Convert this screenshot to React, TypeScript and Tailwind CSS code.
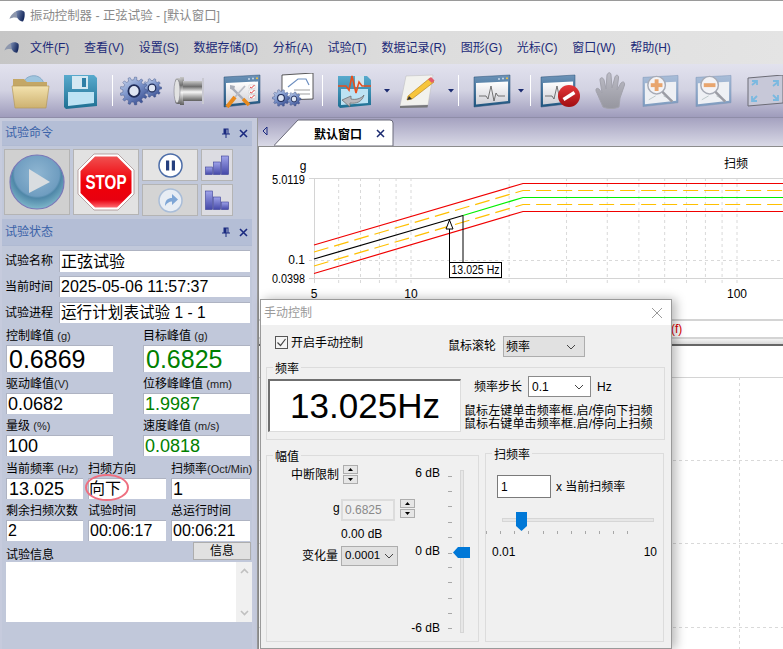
import React from "react";

const font = { fontFamily: '"Liberation Sans","Noto Sans CJK SC",sans-serif' };

function gearPath(cx: number, cy: number, r: number, teeth: number) {
  const pts: string[] = [];
  const R = r * 0.8;
  for (let i = 0; i < teeth; i++) {
    const a = (i / teeth) * Math.PI * 2;
    const s = (Math.PI * 2) / teeth;
    const p = (ang: number, rad: number) => `${(cx + Math.cos(ang) * rad).toFixed(1)} ${(cy + Math.sin(ang) * rad).toFixed(1)}`;
    pts.push(p(a - s * 0.28, R), p(a - s * 0.16, r), p(a + s * 0.16, r), p(a + s * 0.28, R));
  }
  return "M" + pts.join("L") + "Z";
}

function Gear({ cx, cy, r, teeth = 10 }: { cx: number; cy: number; r: number; teeth?: number }) {
  return (
    <g>
      <path d={gearPath(cx, cy, r, teeth)} fill="url(#gearG)" stroke="#33467c" strokeWidth="0.4" />
      <ellipse cx={cx} cy={cy} rx={r * 0.4} ry={r * 0.42} fill="#dfe6f3" stroke="#1f2c58" strokeWidth={r * 0.13} />
    </g>
  );
}

function Defs() {
  return (
    <svg width="0" height="0" className="absolute">
      <defs>
        <linearGradient id="gearG" x1="0" y1="0" x2="0.7" y2="1"><stop offset="0" stopColor="#d3dff2" /><stop offset="0.5" stopColor="#7f97cc" /><stop offset="1" stopColor="#3a4f92" /></linearGradient>
        <linearGradient id="folderG" x1="0" y1="0" x2="0" y2="1"><stop offset="0" stopColor="#f3e2ae" /><stop offset="1" stopColor="#cdb170" /></linearGradient>
        <linearGradient id="floppyG" x1="0" y1="0" x2="0" y2="1"><stop offset="0" stopColor="#58aacd" /><stop offset="1" stopColor="#1e6f92" /></linearGradient>
        <linearGradient id="cylG" x1="0" y1="0" x2="0" y2="1"><stop offset="0" stopColor="#c8c8c8" /><stop offset="0.28" stopColor="#6f6f6f" /><stop offset="0.55" stopColor="#f6f6f6" /><stop offset="1" stopColor="#5f5f5f" /></linearGradient>
        <linearGradient id="winG" x1="0" y1="0" x2="0" y2="1"><stop offset="0" stopColor="#6d93b8" /><stop offset="1" stopColor="#1f5680" /></linearGradient>
        <linearGradient id="winPale" x1="0" y1="0" x2="0" y2="1"><stop offset="0" stopColor="#a9bdd8" /><stop offset="1" stopColor="#7f9cc0" /></linearGradient>
        <linearGradient id="paperG" x1="0" y1="0" x2="0" y2="1"><stop offset="0" stopColor="#fff" /><stop offset="1" stopColor="#cfcfd6" /></linearGradient>
        <radialGradient id="playG" cx="0.5" cy="0.35" r="0.75"><stop offset="0" stopColor="#8fb6d2" /><stop offset="0.55" stopColor="#6f9dc0" /><stop offset="0.6" stopColor="#4f87a8" /><stop offset="1" stopColor="#98d0dc" /></radialGradient>
        <linearGradient id="stopG" x1="0" y1="0" x2="0" y2="1"><stop offset="0" stopColor="#f05050" /><stop offset="0.5" stopColor="#f00008" /><stop offset="0.85" stopColor="#e80010" /><stop offset="1" stopColor="#ff6a70" /></linearGradient>
        <linearGradient id="barG" x1="0" y1="0" x2="0" y2="1"><stop offset="0" stopColor="#a0a4ea" /><stop offset="1" stopColor="#4448a8" /></linearGradient>
        <linearGradient id="handG" x1="0" y1="0" x2="0" y2="1"><stop offset="0" stopColor="#bcbcc6" /><stop offset="1" stopColor="#96969f" /></linearGradient>
        <linearGradient id="noEntry" x1="0" y1="0" x2="0" y2="1"><stop offset="0" stopColor="#e4383a" /><stop offset="1" stopColor="#a00c10" /></linearGradient>
        <linearGradient id="logoG" x1="0" y1="0" x2="1" y2="0.4"><stop offset="0" stopColor="#7d8fb4" /><stop offset="1" stopColor="#16295e" /></linearGradient>
      </defs>
    </svg>
  );
}

function DropArrow() {
  return <svg width="6" height="4" viewBox="0 0 6 4"><path d="M0 0H6L3 3.5Z" fill="#1a2a70" /></svg>;
}
function Sep() {
  return <div className="w-px h-[31px] bg-white shrink-0" />;
}

function Folder() {
  return (
    <svg width="40" height="38" viewBox="0 0 40 38" className="shrink-0">
      <path d="M12 12C14 2 30 0 33 12Z" fill="#9fc5de" stroke="#86aac8" />
      <path d="M2 7H13L16 10H36V20H2Z" fill="#c4a765" />
      <path d="M1 14H38L35 36H4Z" fill="url(#folderG)" stroke="#b59a5c" strokeWidth="0.7" />
    </svg>
  );
}
function Floppy() {
  return (
    <svg width="36" height="38" viewBox="0 0 36 38" className="shrink-0">
      <path d="M1 3H31L34 6V34L3 37L1 35Z" fill="url(#floppyG)" />
      <rect x="9" y="4" width="16" height="13" fill="#d4e8f2" />
      <rect x="19" y="6" width="4" height="9" fill="#2e7fa6" />
      <path d="M5 20H31V31L5 34Z" fill="#bde3f4" />
    </svg>
  );
}
function Gears() {
  return (
    <svg width="42" height="36" viewBox="0 0 42 36" className="shrink-0">
      <Gear cx={32} cy={15} r={9.5} teeth={10} />
      <Gear cx={14} cy={18} r={14} teeth={13} />
    </svg>
  );
}
function Cylinder() {
  return (
    <svg width="36" height="30" viewBox="0 0 36 30" className="shrink-0">
      <rect x="8" y="1" width="4" height="28" fill="url(#cylG)" />
      <rect x="11" y="5" width="19" height="20" fill="url(#cylG)" />
      <rect x="30" y="2" width="2" height="26" fill="#c9c9d2" />
      <rect x="3" y="2" width="7" height="26" rx="3" fill="url(#cylG)" />
      <ellipse cx="5" cy="15" rx="3" ry="12" fill="#e2e2e2" stroke="#70707a" strokeWidth="0.5" />
    </svg>
  );
}
function WinFrame({ pale, children, w = 38 }: { pale?: boolean; children?: React.ReactNode; w?: number }) {
  return (
    <svg width={w} height="34" viewBox="0 0 38 34" className="shrink-0">
      <path d="M1 3L37 1V29L1 33Z" fill={pale ? "url(#winPale)" : "url(#winG)"} stroke={pale ? "#7b93b5" : "#264f75"} strokeWidth="0.5" />
      <path d="M3 9L35 7.5V27L3 30.5Z" fill="url(#paperG)" />
      <circle cx="26" cy="5" r="1" fill="#c9d9ea" /><circle cx="30" cy="4.6" r="1" fill="#c9d9ea" /><circle cx="34" cy="4.3" r="1" fill="#f4c542" />
      {children}
    </svg>
  );
}
function Tools() {
  return (
    <WinFrame>
      <path d="M26 11h6v3.5h-6zM26 16h6v3.5h-6zM26 21h6v3.5h-6z" fill="#fff" stroke="#bbb" strokeWidth="0.4" />
      <path d="M27 13l1.5 1 3-3M27 18l1.5 1 3-3M27 23l1.5 1 3-3" fill="none" stroke="#d22" strokeWidth="0.9" />
      <path d="M9 14L25 30" stroke="#a8adb8" strokeWidth="2.4" />
      <path d="M7 11l5 1-1 4-4-1z" fill="#a8adb8" />
      <path d="M22 12L12 23" stroke="#b9bcc4" strokeWidth="1.8" />
      <path d="M12 23L4 33" stroke="#e98a1c" strokeWidth="4" />
      <path d="M20 25L26 31" stroke="#e98a1c" strokeWidth="3.5" />
    </WinFrame>
  );
}
function GearDoc() {
  return (
    <svg width="44" height="36" viewBox="0 0 44 36" className="shrink-0">
      <path d="M10 2L41 0V26L10 27Z" fill="#fff" stroke="#333" strokeWidth="0.8" />
      <path d="M16 14L26 6H34L37 12" fill="none" stroke="#6d8fc0" strokeWidth="1.2" />
      <path d="M22 17H38M24 21H38" stroke="#777" strokeWidth="0.7" />
      <Gear cx={22} cy={26} r={7} teeth={9} />
      <Gear cx={9} cy={25} r={8.5} teeth={10} />
    </svg>
  );
}
function WaveFloppy() {
  return (
    <svg width="36" height="36" viewBox="0 0 36 36" className="shrink-0">
      <path d="M1 3H30L34 7V32L3 35L1 33Z" fill="url(#floppyG)" />
      <rect x="18" y="3" width="9" height="11" fill="#cfe4ee" />
      <path d="M4 16H31V30L4 32Z" fill="#bde3f4" />
      <path d="M1 13H9L12 17L15 3L19 20L22 9L25 13H34" fill="none" stroke="#e6501e" strokeWidth="1.6" />
      <path d="M27 22C24 26 18 27 14 26V23L5 27L13 34V30C19 31 25 29 27 22Z" fill="#b8b8bd" stroke="#666" strokeWidth="0.7" />
    </svg>
  );
}
function Note() {
  return (
    <svg width="36" height="34" viewBox="0 0 36 34" className="shrink-0">
      <path d="M7 2L34 1L29 31L1 32Z" fill="#f2f2ee" stroke="#bbb" strokeWidth="0.5" />
      <path d="M1 32L29 31L28.5 33.5L1 34Z" fill="#77787a" />
      <path d="M9 22L31 4L35 8L13 25L8 26Z" fill="#f7c53b" stroke="#b07c12" strokeWidth="0.6" />
      <path d="M29 5.5L32 3L35.5 6.5L33 9Z" fill="#e25a6a" />
      <path d="M8 26L10 22L13 25Z" fill="#333" />
    </svg>
  );
}
const pulse = "M6 22H13L15 25L18 12L21 27L23 19L25 22H32";
function WaveWin() {
  return <WinFrame><path d={pulse} fill="none" stroke="#555" strokeWidth="0.8" /></WinFrame>;
}
function StopWin() {
  return (
    <svg width="41" height="34" viewBox="0 0 41 34" className="shrink-0">
      <path d="M1 3L35 1V29L1 33Z" fill="url(#winG)" stroke="#264f75" strokeWidth="0.5" />
      <path d="M3 9L33 7.5V27L3 30.5Z" fill="url(#paperG)" />
      <path d="M5 22H12L14 25L17 12L20 26" fill="none" stroke="#555" strokeWidth="0.8" />
      <circle cx="29" cy="22" r="11" fill="url(#noEntry)" />
      <path d="M23.5 25.5L34.5 18.5" stroke="#fff" strokeWidth="3.4" />
    </svg>
  );
}
function Hand() {
  return (
    <svg width="32" height="38" viewBox="0 0 32 38" className="shrink-0">
      <path d="M9 35L3 21C1 18 2 15 5 17L8 21L6 8C6 5 9 5 10 8L12 17L13 3C14 0 17 0 17 3L18 16L21 5C22 2 25 3 24.5 6L23 18L27 11C29 9 31 10 30.5 13L26 26L25 35C20 37 14 37 9 35Z" fill="url(#handG)" stroke="#a2a2ac" />
    </svg>
  );
}
function ZoomIcon({ plus }: { plus?: boolean }) {
  return (
    <svg width="37" height="34" viewBox="0 0 38 34" className="shrink-0">
      <path d="M1 3L37 1V29L1 33Z" fill="url(#winPale)" stroke="#7b93b5" strokeWidth="0.5" />
      <path d="M3 9L35 7.5V27L3 30.5Z" fill="#eef0f4" />
      <path d="M7 26L14 22M22 22L32 27" stroke="#9aa" strokeWidth="0.6" />
      <circle cx="15" cy="11" r="9" fill="#f3f3f6" stroke="#a7abb6" strokeWidth="1.5" />
      <path d="M21 18L31 28" stroke="#9b9ca4" strokeWidth="2.5" />
      <rect x="9" y="9" width="12" height="4" fill="#e8a56e" />
      {plus && <rect x="13" y="5" width="4" height="12" fill="#e8a56e" />}
    </svg>
  );
}
function FitIcon() {
  return (
    <svg width="36" height="32" viewBox="0 0 36 32" className="shrink-0">
      <path d="M1 3L36 0V28L1 31Z" fill="#c7c8d8" stroke="#6c6c76" />
      <path d="M5 10L10 6M5 6H10V10M31 7L26 11M26 6H31V11M5 26L10 21M5 21V26H10M31 25L26 20M31 20V25H26" fill="none" stroke="#7bb9e0" strokeWidth="1.8" />
    </svg>
  );
}

function Toolbar() {
  return (
    <div className="h-[54px] flex items-center pl-[11px] border-b border-[#8f8da8] bg-gradient-to-b from-[#e2e2ee] via-[#d2d2e2] to-[#9f9cbc] overflow-hidden">
      <Folder />
      <div className="ml-[12px]"><Floppy /></div>
      <div className="ml-[13px]"><Sep /></div>
      <div className="ml-[7px]"><Gears /></div>
      <div className="ml-[10px]"><Cylinder /></div>
      <div className="ml-[15px]"><Tools /></div>
      <div className="ml-[11px]"><GearDoc /></div>
      <div className="ml-[6px]"><Sep /></div>
      <div className="ml-[14px]"><WaveFloppy /></div>
      <div className="ml-[11px]"><DropArrow /></div>
      <div className="ml-[9px]"><Note /></div>
      <div className="ml-[13px]"><DropArrow /></div>
      <div className="ml-[4px]"><Sep /></div>
      <div className="ml-[14px]"><WaveWin /></div>
      <div className="ml-[7px]"><DropArrow /></div>
      <div className="ml-[6px]"><Sep /></div>
      <div className="ml-[9px]"><StopWin /></div>
      <div className="ml-[13px]"><Hand /></div>
      <div className="ml-[16px]"><ZoomIcon plus /></div>
      <div className="ml-[16px]"><ZoomIcon /></div>
      <div className="ml-[15px]"><FitIcon /></div>
    </div>
  );
}

function PanelHeader({ title, h }: { title: string; h: string }) {
  return (
    <div className={`${h} flex items-center pl-[3px] pr-[4px] bg-[#b4bed6] border-b border-[#b0bad2]`}>
      <span className="text-[12px] text-[#3a62a8] flex-1">{title}</span>
      <svg width="10" height="10" viewBox="0 0 10 10" className="mr-[8px]"><path d="M2.5 0.5H7.5V5.5H9V6.5H5.5V10H4.5V6.5H1V5.5H2.5ZM5.5 1.5V5.5H6.5V1.5Z" fill="#1a2a80" /></svg>
      <svg width="9" height="9" viewBox="0 0 9 9"><path d="M1 1L8 8M8 1L1 8" stroke="#1a2a80" strokeWidth="1.6" /></svg>
    </div>
  );
}

function Field({ v, size = "text-[16px]", color = "text-black", h = "h-[21px]", pl = "pl-px" }: { v: string; size?: string; color?: string; h?: string; pl?: string }) {
  return (
    <div className={`${h} ${pl} ${size} ${color} bg-white border-t border-l border-[#aeb3c2] flex items-center leading-none whitespace-nowrap overflow-hidden`}>
      {v}
    </div>
  );
}

function Lbl({ t, unit, h = "h-[21px]" }: { t: string; unit?: string; h?: string }) {
  return (
    <div className={`${h} text-[12px] text-black flex items-end whitespace-nowrap`}>
      <span>{t}{unit && <span className="text-[11px] text-[#222]">{unit}</span>}</span>
    </div>
  );
}

function CmdBtn({ cls, children }: { cls: string; children: React.ReactNode }) {
  return <div className={`${cls} flex items-center justify-center border border-[#b4b4b4] shrink-0`}>{children}</div>;
}

function Commands() {
  return (
    <div className="h-[73px] flex gap-[3px] pl-[2px] pt-[3px]">
      <CmdBtn cls="w-[66px] h-[66px] bg-[#d0d0d0]">
        <svg width="56" height="56" viewBox="0 0 56 56">
          <circle cx="28" cy="28" r="27" fill="url(#playG)" stroke="#7a78b8" strokeWidth="1.2" />
          <path d="M20 15L41 28L20 39Z" fill="#d9dde0" />
        </svg>
      </CmdBtn>
      <CmdBtn cls="w-[66px] h-[66px] bg-[#e2e2e2]">
        <svg width="58" height="58" viewBox="0 0 58 58">
          <path d="M17 1H41L57 17V41L41 57H17L1 41V17Z" fill="#fff" stroke="#a89090" strokeWidth="0.8" />
          <path d="M18 3.5H40L54.5 18V40L40 54.5H18L3.5 40V18Z" fill="url(#stopG)" />
          <text x="29" y="36" textAnchor="middle" fontSize="20" fontWeight="700" fill="#fff" fontFamily='"Liberation Sans",sans-serif' textLength="41" lengthAdjust="spacingAndGlyphs">STOP</text>
        </svg>
      </CmdBtn>
      <div className="flex flex-col gap-[3px]">
        <CmdBtn cls="w-[56px] h-[32px] bg-[#e4e4e4]">
          <svg width="25" height="25" viewBox="0 0 25 25">
            <circle cx="12.5" cy="12.5" r="11.5" fill="#fff" stroke="#4c6da8" strokeWidth="1.5" />
            <rect x="8" y="7.5" width="3.2" height="10" fill="#26407f" />
            <rect x="13.8" y="7.5" width="3.2" height="10" fill="#26407f" />
          </svg>
        </CmdBtn>
        <CmdBtn cls="w-[56px] h-[32px] bg-[#d4d4d4]">
          <svg width="25" height="25" viewBox="0 0 25 25">
            <circle cx="12.5" cy="12.5" r="11.5" fill="#e8edf4" stroke="#a9bdd8" strokeWidth="1.5" />
            <path d="M7 18C7 12 10 10 14 10V6L20 11.5L14 17V13.5C11 13.5 9 15 7 18Z" fill="#7fa6d6" />
          </svg>
        </CmdBtn>
      </div>
      <div className="flex flex-col gap-[3px]">
        <CmdBtn cls="w-[32px] h-[32px] bg-[#dcdce2]">
          <svg width="24" height="20" viewBox="0 0 24 20">
            <rect x="0.5" y="12" width="7" height="7.5" fill="url(#barG)" stroke="#3a3e96" strokeWidth="0.6" />
            <rect x="8.5" y="7" width="7" height="12.5" fill="url(#barG)" stroke="#3a3e96" strokeWidth="0.6" />
            <rect x="16.5" y="1" width="7" height="18.5" fill="url(#barG)" stroke="#3a3e96" strokeWidth="0.6" />
          </svg>
        </CmdBtn>
        <CmdBtn cls="w-[32px] h-[32px] bg-[#dcdce2]">
          <svg width="24" height="20" viewBox="0 0 24 20">
            <rect x="0.5" y="1" width="7" height="18.5" fill="url(#barG)" stroke="#3a3e96" strokeWidth="0.6" />
            <rect x="8.5" y="7" width="7" height="12.5" fill="url(#barG)" stroke="#3a3e96" strokeWidth="0.6" />
            <rect x="16.5" y="12" width="7" height="7.5" fill="url(#barG)" stroke="#3a3e96" strokeWidth="0.6" />
          </svg>
        </CmdBtn>
      </div>
    </div>
  );
}

function StatusRow({ l, v, h = "h-[21px]", size }: { l: string; v: string; h?: string; size?: string }) {
  return (
    <div className={`flex items-center ${h}`}>
      <div className="w-[53px] text-[12px] whitespace-nowrap -ml-px mr-px">{l}</div>
      <div className="w-[191px]"><Field v={v} h={h} size={size} /></div>
    </div>
  );
}

function Status() {
  const grn = "text-[#008000]";
  return (
    <div className="pl-[6px]">
      <div className="pt-[4px] flex flex-col gap-[4px]">
        <StatusRow l="试验名称" v="正弦试验" h="h-[22px]" />
        <StatusRow l="当前时间" v="2025-05-06 11:57:37" />
        <div className="mt-px"><StatusRow l="试验进程" v="运行计划表试验 1 - 1" size="text-[15.6px]" /></div>
      </div>
      <div className="mt-[1px] grid grid-cols-[107px_107px] gap-x-[30px]">
        <Lbl t="控制峰值 " unit="(g)" /><Lbl t="目标峰值 " unit="(g)" />
        <Field v="0.6869" size="text-[25px]" h="h-[27px]" pl="pl-[2px]" /><Field v="0.6825" size="text-[25px]" color={grn} h="h-[27px]" pl="pl-[2px]" />
        <Lbl t="驱动峰值" unit="(V)" /><Lbl t="位移峰峰值 " unit="(mm)" />
        <Field v="0.0682" size="text-[18px]" /><Field v="1.9987" size="text-[18px]" color={grn} />
        <Lbl t="量级 " unit="(%)" /><Lbl t="速度峰值 " unit="(m/s)" />
        <Field v="100" size="text-[18px]" /><Field v="0.0818" size="text-[18px]" color={grn} />
      </div>
      <div className="grid grid-cols-[77px_78px_79px] gap-x-[5px]">
        <Lbl t="当前频率 " unit="(Hz)" h="h-[22px]" /><Lbl t="扫频方向" h="h-[22px]" /><Lbl t="扫频率" unit="(Oct/Min)" h="h-[22px]" />
        <Field v="13.025" size="text-[18px]" pl="pl-[2px]" />
        <div className="relative">
          <Field v="向下" size="text-[16px]" pl="pl-0" />
          <div className="absolute left-[-3px] top-[-4px] w-[44px] h-[27px] rounded-[50%] border-2 border-[#ee6f80]" />
        </div>
        <Field v="1" size="text-[18px]" />
        <Lbl t="剩余扫频次数" /><Lbl t="试验时间" /><Lbl t="总运行时间" />
        <Field v="2" /><Field v="00:06:17" /><Field v="00:06:21" />
      </div>
      <div className="h-[21px] w-[245px] flex justify-between items-start">
        <div className="text-[12px] pt-[7px] leading-[15px]">试验信息</div>
        <div className="mt-px w-[58px] h-[18px] bg-[#e1e1e1] border border-[#adadad] text-[12px] flex items-center justify-center">信息</div>
      </div>
      <div className="w-[246px] h-[60px] bg-white flex justify-end">
        <div className="w-[16px] bg-[#f0f0f0] flex flex-col justify-between items-center py-[6px]">
          <svg width="9" height="6" viewBox="0 0 9 6"><path d="M1 5L4.5 1.5L8 5" fill="none" stroke="#c0c0c0" strokeWidth="1.6" /></svg>
          <svg width="9" height="6" viewBox="0 0 9 6"><path d="M1 1L4.5 4.5L8 1" fill="none" stroke="#c0c0c0" strokeWidth="1.6" /></svg>
        </div>
      </div>
    </div>
  );
}

function xOf(f: number) { return 411 + Math.log10(f / 10) * 326; }

function TopChart() {
  const minor = [6, 7, 8, 9, 10, 20, 30, 40, 50, 60, 70, 80, 90, 100, 200];
  const t = { fontFamily: '"Liberation Sans","Noto Sans CJK SC",sans-serif', fontSize: 12, fill: "#000" };
  const orange = "#ffc000";
  return (
    <svg width="524" height="172" viewBox="259 147 524 172" className="block shrink-0">
      {minor.map((f) => (
        <line key={f} x1={xOf(f)} x2={xOf(f)} y1="178" y2="283" stroke="#d9d9d9" strokeDasharray="3 3" />
      ))}
      <line x1="314.5" x2="314.5" y1="178" y2="283" stroke="#d4d4d4" />
      <line x1="309" x2="783" y1="178.5" y2="178.5" stroke="#d4d4d4" />
      <line x1="309" x2="783" y1="278.5" y2="278.5" stroke="#d4d4d4" />
      <line x1="309" x2="783" y1="260.5" y2="260.5" stroke="#d9d9d9" strokeDasharray="3 3" />
      <path d="M314 245L523 183.5H783" fill="none" stroke="#f00000" strokeWidth="1.2" />
      <path d="M314 273.5L523 211.5H783" fill="none" stroke="#f00000" strokeWidth="1.2" />
      <path d="M314 252L523 190.5H783" fill="none" stroke={orange} strokeWidth="1.2" strokeDasharray="15 6" />
      <path d="M314 266L523 204.5H783" fill="none" stroke={orange} strokeWidth="1.2" strokeDasharray="15 6" />
      <path d="M463 215.5L523 197.5H783" fill="none" stroke="#00f000" strokeWidth="1.2" />
      <path d="M314 259L463 215.5" fill="none" stroke="#000" strokeWidth="1.2" />
      <path d="M449.5 219V262M463 215.5V262" stroke="#000" />
      <path d="M449.5 220L453 229H446Z" fill="#fff" stroke="#000" />
      <rect x="449.5" y="262.5" width="52" height="15" fill="#fff" stroke="#000" />
      <text x="451.5" y="274" {...t} textLength="48" lengthAdjust="spacingAndGlyphs">13.025 Hz</text>
      <text x="303" y="170" {...t} textAnchor="middle">g</text>
      <text x="272" y="184" {...t} textLength="33" lengthAdjust="spacingAndGlyphs">5.0119</text>
      <text x="305" y="264" {...t} textAnchor="end">0.1</text>
      <text x="272" y="283" {...t} textLength="33" lengthAdjust="spacingAndGlyphs">0.0398</text>
      <text x="314" y="298" {...t} textAnchor="middle">5</text>
      <text x="411" y="298" {...t} textAnchor="middle">10</text>
      <text x="737" y="298" {...t} textAnchor="middle">100</text>
      <text x="736" y="168" {...t} textAnchor="middle">扫频</text>
    </svg>
  );
}

function BottomChart() {
  return (
    <svg width="524" height="303" viewBox="259 346 524 303" className="block">
      <line x1="259" x2="783" y1="377.5" y2="377.5" stroke="#d4d4d4" />
      {[460.5, 543.5, 627.5].map((y) => (
        <line key={y} x1="259" x2="783" y1={y} y2={y} stroke="#d9d9d9" strokeDasharray="3 3" />
      ))}
      <line x1="739.5" x2="739.5" y1="377" y2="649" stroke="#d9d9d9" strokeDasharray="3 3" />
    </svg>
  );
}

function Chevron({ c = "#444" }: { c?: string }) {
  return <svg width="10" height="6" viewBox="0 0 10 6"><path d="M1 1L5 5L9 1" fill="none" stroke={c} strokeWidth="1" /></svg>;
}

function Spin({ cls = "h-[9px]" }: { cls?: string }) {
  return (
    <div className="flex flex-col gap-px">
      <div className={`w-[15px] ${cls} bg-[#e6e6e6] border border-[#adadad] flex items-center justify-center`}>
        <svg width="5" height="3" viewBox="0 0 5 3"><path d="M0 3H5L2.5 0Z" fill="#000" /></svg>
      </div>
      <div className={`w-[15px] ${cls} bg-[#e6e6e6] border border-[#adadad] flex items-center justify-center`}>
        <svg width="5" height="3" viewBox="0 0 5 3"><path d="M0 0H5L2.5 3Z" fill="#000" /></svg>
      </div>
    </div>
  );
}

function Legend({ t, cls }: { t: string; cls: string }) {
  return <div className={`absolute ${cls} bg-[#f0f0f0] px-[2px] text-[12px] leading-[14px]`}>{t}</div>;
}

function VTicks() {
  const ys = [105, 150, 196, 243, 289, 335, 378, 424, 471, 517, 562].map((v) => Math.round(v / 3));
  return (
    <svg width="6" height="165" viewBox="0 30 6 165" className="block">
      {ys.map((y) => <line key={y} x1="0" x2="4" y1={y + 0.5} y2={y + 0.5} stroke="#a8a8a8" />)}
    </svg>
  );
}

function Dialog() {
  const hTicks = [748, 790, 832, 874, 917, 961, 1003, 1045, 1087, 1129, 1171].map((v) => Math.round(v / 3 - 249));
  return (
    <div className="absolute left-[260px] top-[299px] w-[412px] h-[350px] bg-[#f0f0f0] border border-[#9a9a9a] shadow-[4px_0_10px_rgba(0,0,0,0.28)] text-[12px] text-black">
      <div className="h-[25px] bg-white flex items-center justify-between pl-[3px] pr-[8px]">
        <span className="text-[#9a9a9a]">手动控制</span>
        <svg width="12" height="12" viewBox="0 0 12 12"><path d="M1 1L11 11M11 1L1 11" stroke="#9a9a9a" strokeWidth="1" /></svg>
      </div>
      <div className="h-[42px] flex items-start pl-[14px] pt-[11px]">
        <div className="w-[13px] h-[13px] bg-[#f4f4f4] border border-[#555] flex items-center justify-center shrink-0">
          <svg width="11" height="11" viewBox="0 0 11 11"><path d="M1.5 5.5L4.5 8.5L9.5 2" fill="none" stroke="#444" strokeWidth="1.2" /></svg>
        </div>
        <span className="ml-[3px] leading-[14px] w-[157px]">开启手动控制</span>
        <span className="pt-[3px] leading-[14px] w-[55px]">鼠标滚轮</span>
        <div className="h-[21px] w-[82px] bg-[#e1e1e1] border border-[#adadad] flex items-center justify-between pl-[2px] pr-[8px]">
          <span>频率</span><Chevron />
        </div>
      </div>
      <div className="relative ml-[5px] w-[399px] h-[73px] border border-[#dcdcdc] flex">
        <Legend t="频率" cls="left-[6px] top-[-6px]" />
        <div className="ml-px mt-[11px] w-[193px] h-[53px] bg-white border-l-2 border-t-2 border-[#6f6f6f] border-r border-b border-r-[#dcdcdc] border-b-[#dcdcdc] flex items-center justify-center text-[35px] leading-none shrink-0 pb-px" style={font}>
          13.025Hz
        </div>
        <div className="ml-[3px] flex-1">
          <div className="flex items-center pl-[10px] mt-[8px] h-[21px]">
            <span className="w-[54px]">频率步长</span>
            <div className="w-[63px] h-[21px] bg-white border border-[#8a8a8a] flex items-center justify-between pl-[3px] pr-[6px]">
              <span>0.1</span><Chevron />
            </div>
            <span className="ml-[6px]">Hz</span>
          </div>
          <div className="mt-[8px] leading-[13px] text-[12px] whitespace-nowrap tracking-[0.12px]">
            <div>鼠标左键单击频率框.启/停向下扫频</div>
            <div>鼠标右键单击频率框.启/停向上扫频</div>
          </div>
        </div>
      </div>
      <div className="flex ml-[5px] mt-[13px] gap-[6px]">
        <div className="relative w-[213px] h-[187px] mt-[2px] border border-[#dcdcdc] flex">
          <Legend t="幅值" cls="left-[6px] top-[-6px]" />
          <div className="w-[149px] shrink-0 flex flex-col items-start">
            <div className="flex items-center gap-[4px] ml-[24px] mt-[9px]">
              <span className="w-[48px]">中断限制</span><Spin />
            </div>
            <div className="flex items-start mt-[15px] ml-[66px]">
              <span className="w-[8px] mt-[2px] leading-[14px]">g</span>
              <div className="w-[54px] h-[22px] bg-[#f0f0f0] border-2 border-[#dcdcdc] text-[#8a8a8a] pl-[2px] flex items-center">0.6825</div>
              <div className="ml-[5px]"><Spin /></div>
            </div>
            <div className="ml-[74px] mt-[6px] leading-[14px] h-[14px]">0.00 dB</div>
            <div className="flex items-center ml-[35px] mt-[5px]">
              <span className="w-[39px]">变化量</span>
              <div className="w-[57px] h-[20px] bg-[#e1e1e1] border border-[#adadad] flex items-center justify-between pl-[3px] pr-[3px]">
                <span className="text-[11.5px]">0.0001</span><Chevron />
              </div>
            </div>
          </div>
          <div className="w-[24px] mt-[10px] h-[169px] flex flex-col justify-between items-end leading-[14px] whitespace-nowrap shrink-0">
            <span>6 dB</span><span>0 dB</span><span>-6 dB</span>
          </div>
          <div className="ml-[8px] mt-[15px]"><VTicks /></div>
          <div className="relative ml-[6px] mt-[14px] w-[4px] h-[163px] bg-[#e7e7e7] border border-[#d6d6d6]">
            <svg width="17" height="11" viewBox="0 0 17 11" className="absolute left-[-8px] top-[76px]"><path d="M0 5.5L5 0H17V11H5Z" fill="#0078d7" /></svg>
          </div>
        </div>
        <div className="relative w-[179px] h-[189px] border border-[#dcdcdc]">
          <Legend t="扫频率" cls="left-[6px] top-[-6px]" />
          <div className="flex items-center ml-[11px] mt-[21px]">
            <div className="w-[54px] h-[23px] bg-white border border-[#7a7a7a] pl-[3px] flex items-center">1</div>
            <span className="ml-[5px]">x 当前扫频率</span>
          </div>
          <div className="relative ml-[16px] mt-[20px] w-[152px] h-[4px] bg-[#e7e7e7] border border-[#d6d6d6]">
            <svg width="11" height="19" viewBox="0 0 11 19" className="absolute left-[13px] top-[-7px]"><path d="M0 0H11V14L5.5 19L0 14Z" fill="#0078d7" /></svg>
          </div>
          <svg width="178" height="4" className="block mt-[9px]">
            {hTicks.map((x) => <line key={x} x1={x + 0.5} x2={x + 0.5} y1="0" y2="3" stroke="#a8a8a8" />)}
          </svg>
          <div className="flex justify-between ml-[6px] mr-[6px] mt-[10px] leading-[14px]">
            <span>0.01</span><span>10</span>
          </div>
        </div>
      </div>
    </div>
  );
}

const menus = ["文件(F)", "查看(V)", "设置(S)", "数据存储(D)", "分析(A)", "试验(T)", "数据记录(R)", "图形(G)", "光标(C)", "窗口(W)", "帮助(H)"];

function Logo({ w = 16 }: { w?: number }) {
  return (
    <svg width={w} height={w * 0.75} viewBox="0 0 16 12" className="shrink-0">
      <path d="M0.5 9C1.5 5 5 2 8 1C9 4 8.5 7 9.5 8.5C7 7 3 7.5 0.5 9Z" fill="#8d97ad" />
      <path d="M7 1.2C10 -0.3 14 0 15.5 2C16 5 15.5 9 14 11.5C11.5 11.5 9.5 10 8.8 8.5C7.6 6.5 8 3.5 7 1.2Z" fill="url(#logoG)" />
    </svg>
  );
}

export default function App() {
  return (
    <div className="relative w-full h-[649px] overflow-hidden bg-white text-[12px]" style={font}>
      <Defs />
      <div className="h-[31px] bg-white border-t border-[#9a9a9a] flex items-center pl-[9px]">
        <Logo w={16} />
        <span className="ml-[5px] text-[#8a8a8a] text-[12.4px] whitespace-nowrap">振动控制器 - 正弦试验 - [默认窗口]</span>
      </div>
      <div className="h-[33px] bg-gradient-to-r from-[#c6c6c6] via-[#dcdcdc] to-[#e4e4e4] flex items-center pl-[4px]">
        <Logo w={15} />
        <div className="ml-[11px] flex gap-[14.7px] text-[#1c2a78] whitespace-nowrap">
          {menus.map((m) => <span key={m}>{m}</span>)}
        </div>
      </div>
      <Toolbar />
      <div className="flex h-[531px]">
        <aside className="w-[258px] shrink-0 bg-[#c6cbdd] pl-[2px] pr-[5px] pt-[3px] border-r border-[#9a9a9a]">
          <div className="bg-[#c1c8da] h-[528px]">
            <PanelHeader title="试验命令" h="h-[25px]" />
            <Commands />
            <PanelHeader title="试验状态" h="h-[27px]" />
            <div className="-ml-[2px]"><Status /></div>
          </div>
        </aside>
        <main className="flex-1 min-w-0 flex flex-col">
          <div className="h-[28px] shrink-0 bg-gradient-to-b from-[#a5a2c0] to-[#d9d9e6] flex items-end relative">
            <svg width="8" height="10" viewBox="0 0 8 10" className="absolute left-[3px] top-[8px]"><path d="M6 1L2 5L6 9Z" fill="none" stroke="#1a2a80" /></svg>
            <svg width="120" height="27" viewBox="0 0 120 27" className="absolute left-[16px] top-[1px]">
              <path d="M0 26.5L24 1H116Q119 1 119 4V27H0Z" fill="#fff" stroke="#6a6a7a" />
            </svg>
            <span className="absolute left-[56px] top-[8px] font-bold text-[12px] text-black">默认窗口</span>
            <svg width="9" height="9" viewBox="0 0 9 9" className="absolute left-[118px] top-[11px]"><path d="M1 1L8 8M8 1L1 8" stroke="#1a2a70" strokeWidth="1.5" /></svg>
          </div>
          <div className="flex-1 min-h-0 border-t border-l border-[#8c8c8c] bg-white overflow-hidden">
            <TopChart />
            <div className="h-[20px] border-t-2 border-b-2 border-[#d4d4d4] flex items-center pl-[412px] text-[#e00000] text-[12px]">(f)</div>
            <div className="h-[7px] bg-gradient-to-b from-[#f4f4f4] to-[#d8d8d8] border-b-2 border-[#666]" />
            <BottomChart />
          </div>
        </main>
      </div>
      <Dialog />
    </div>
  );
}
